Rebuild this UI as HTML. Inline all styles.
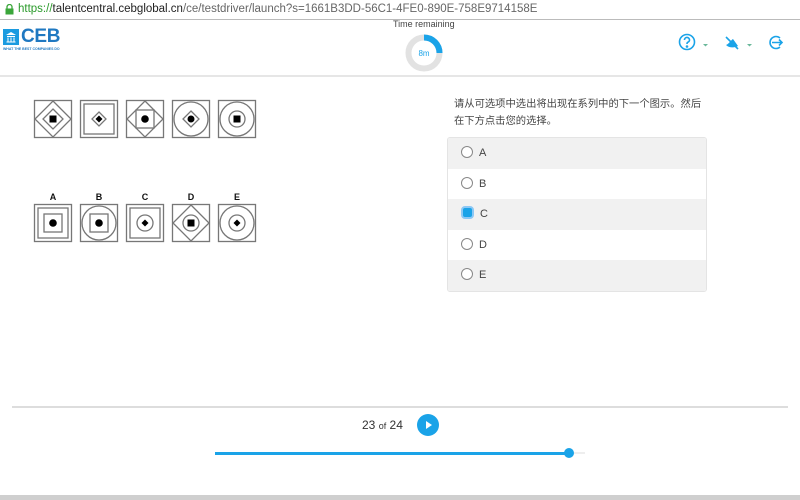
<!DOCTYPE html>
<html><head><meta charset="utf-8"><style>
*{margin:0;padding:0;box-sizing:border-box}
body{width:800px;height:500px;overflow:hidden;background:#fff;font-family:"Liberation Sans","Noto Sans CJK SC",sans-serif;position:relative;color:#333}
.url{position:absolute;left:0;top:0;width:800px;height:20px;border-bottom:1px solid #bbb;background:#fff;font-size:11.5px;line-height:19px;padding-left:18px;color:#666}
.url b{font-weight:normal;color:#2a9a2a}.url i{font-style:normal;color:#222}
.hdr{position:absolute;top:75px;left:0;width:800px;border-top:2px solid #e6e6e6}
.abs{position:absolute}
.opts{position:absolute;left:447px;top:137px;width:260px;border:1px solid #e4e4e4;border-radius:3px;overflow:hidden}
.opt{height:30.6px;font-size:11px;line-height:30px;padding-left:13px;background:#f1f1f1;color:#444}
.opt.w{background:#fff}
.rd{display:inline-block;width:12px;height:12px;border:1px solid #888;border-radius:50%;vertical-align:-2px;margin-right:6px;background:#fff}
</style></head><body>
<div class="url"><svg class="abs" style="left:5px;top:4px" width="9" height="11"><rect x="0.5" y="4.5" width="8" height="6" fill="#3aa63a"/><path d="M2 5V3a2.5 2.5 0 0 1 5 0v2" fill="none" stroke="#3aa63a" stroke-width="1.3"/></svg><b>https://</b><i>talentcentral.cebglobal.cn</i>/ce/testdriver/launch?s=1661B3DD-56C1-4FE0-890E-758E9714158E</div>

<svg class="abs" style="left:3px;top:29px" width="16" height="16"><rect width="16" height="16" fill="#1b9be0"/><path d="M3 6L8 3l5 3zM4 7h8v1H4zM4.5 8.5h1v4h-1zM7.5 8.5h1v4h-1zM10.5 8.5h1v4h-1zM3.5 12.5h9v1h-9z" fill="#fff"/></svg>
<div class="abs" style="left:21px;top:26px;font-size:19px;font-weight:bold;color:#1f78c1;letter-spacing:-0.3px">CEB</div>
<div class="abs" style="left:3px;top:47px;font-size:3.5px;color:#1f78c1;font-weight:bold;white-space:nowrap">WHAT THE BEST COMPANIES DO</div>

<div class="abs" style="left:393px;top:19px;font-size:9px;color:#444">Time remaining</div>
<svg class="abs" style="left:404px;top:33px" width="40" height="40"><circle cx="20" cy="20" r="15.5" fill="none" stroke="#e2e2e2" stroke-width="6"/><path d="M20 4.5A15.5 15.5 0 0 1 35.5 20" fill="none" stroke="#1aa3e8" stroke-width="6"/><text x="20" y="23" font-size="8" fill="#1aa3e8" text-anchor="middle" font-family="Liberation Sans">8m</text></svg>

<svg class="abs" style="left:676px;top:32px" width="124" height="22" fill="none" stroke="#1aa3e8" stroke-width="1.6">
<circle cx="11" cy="10" r="7.5"/><path d="M8.5 8a2.5 2.5 0 1 1 3.3 2.3c-.8.3-.8.8-.8 1.7" /><circle cx="11" cy="14.5" r=".5" fill="#1aa3e8"/>
<path d="M27 12l2.5 2.5 2.5-2.5z" fill="#6ab89a" stroke="none"/>
<path d="M50 5l12 12" /><path d="M50 13c3-1 5-5 7-6l5 7c-2 1-8 3-12-1z" fill="#1aa3e8" stroke="none"/>
<path d="M71 12l2.5 2.5 2.5-2.5z" fill="#6ab89a" stroke="none"/>
<path d="M104 6a6 6 0 1 0 0 9"/><path d="M96 10.5h10M103 7.5l3 3-3 3"/>
</svg>
<div class="hdr"></div>

<svg class="abs" style="left:0;top:90px" width="300" height="160" fill="none" stroke="#777" stroke-width="1.3">
<g transform="translate(34,10)"><rect x="0.5" y="0.5" width="37" height="37"/><path d="M19 1L37 19 19 37 1 19z"/><path d="M19 9L29 19 19 29 9 19z"/><rect x="15.5" y="15.5" width="7" height="7" fill="#000" stroke="none"/></g>
<g transform="translate(80,10)"><rect x="0.5" y="0.5" width="37" height="37"/><rect x="4" y="4" width="30" height="30"/><path d="M19 12L26 19 19 26 12 19z"/><path d="M19 15.5L22.5 19 19 22.5 15.5 19z" fill="#000" stroke="none"/></g>
<g transform="translate(126,10)"><rect x="0.5" y="0.5" width="37" height="37"/><path d="M19 1L37 19 19 37 1 19z"/><rect x="10" y="10" width="18" height="18"/><circle cx="19" cy="19" r="3.8" fill="#000" stroke="none"/></g>
<g transform="translate(172,10)"><rect x="0.5" y="0.5" width="37" height="37"/><circle cx="19" cy="19" r="17"/><path d="M19 11L27 19 19 27 11 19z"/><circle cx="19" cy="19" r="3.5" fill="#000" stroke="none"/></g>
<g transform="translate(218,10)"><rect x="0.5" y="0.5" width="37" height="37"/><circle cx="19" cy="19" r="17"/><circle cx="19" cy="19" r="8"/><rect x="15.5" y="15.5" width="7" height="7" fill="#000" stroke="none"/></g>
<g fill="#111" stroke="none" font-size="9" font-weight="bold" font-family="Liberation Sans" text-anchor="middle"><text x="53" y="110">A</text><text x="99" y="110">B</text><text x="145" y="110">C</text><text x="191" y="110">D</text><text x="237" y="110">E</text></g>
<g transform="translate(34,114)"><rect x="0.5" y="0.5" width="37" height="37"/><rect x="4" y="4" width="30" height="30"/><rect x="10" y="10" width="18" height="18"/><circle cx="19" cy="19" r="3.8" fill="#000" stroke="none"/></g>
<g transform="translate(80,114)"><rect x="0.5" y="0.5" width="37" height="37"/><circle cx="19" cy="19" r="17"/><rect x="10" y="10" width="18" height="18"/><circle cx="19" cy="19" r="3.8" fill="#000" stroke="none"/></g>
<g transform="translate(126,114)"><rect x="0.5" y="0.5" width="37" height="37"/><rect x="4" y="4" width="30" height="30"/><circle cx="19" cy="19" r="8"/><path d="M19 15.5L22.5 19 19 22.5 15.5 19z" fill="#000" stroke="none"/></g>
<g transform="translate(172,114)"><rect x="0.5" y="0.5" width="37" height="37"/><path d="M19 1L37 19 19 37 1 19z"/><circle cx="19" cy="19" r="8"/><rect x="15.5" y="15.5" width="7" height="7" fill="#000" stroke="none"/></g>
<g transform="translate(218,114)"><rect x="0.5" y="0.5" width="37" height="37"/><circle cx="19" cy="19" r="17"/><circle cx="19" cy="19" r="8"/><path d="M19 15.5L22.5 19 19 22.5 15.5 19z" fill="#000" stroke="none"/></g>
</svg>

<div class="abs" style="left:454px;top:96px;font-size:10.3px;line-height:17px;color:#444;width:260px">请从可选项中选出将出现在系列中的下一个图示。然后<br>在下方点击您的选择。</div>
<div class="opts">
<div class="opt"><span class="rd"></span>A</div>
<div class="opt w"><span class="rd"></span>B</div>
<div class="opt"><span class="rd" style="background:#1aa3e8;border:2px solid #8cc8f5;border-radius:4px;width:13px;height:13px"></span>C</div>
<div class="opt w"><span class="rd"></span>D</div>
<div class="opt"><span class="rd"></span>E</div>
</div>

<div class="abs" style="left:12px;top:406px;width:776px;border-top:2px solid #ddd"></div>
<div class="abs" style="left:362px;top:418px;font-size:12px;color:#333">23 <span style="font-size:9px">of</span> 24</div>
<svg class="abs" style="left:416px;top:413px" width="24" height="24"><circle cx="12" cy="12" r="11" fill="#1aa3e8"/><path d="M10 8v8l6-4z" fill="#fff"/></svg>
<div class="abs" style="left:215px;top:452px;width:370px;height:2px;background:#eee"></div>
<div class="abs" style="left:215px;top:451.5px;width:354px;height:3px;background:#1aa3e8"></div>
<div class="abs" style="left:564px;top:448px;width:10px;height:10px;border-radius:50%;background:#1aa3e8"></div>
<div class="abs" style="left:0;top:495px;width:800px;height:5px;background:#cfcfcf"></div>
</body></html>
